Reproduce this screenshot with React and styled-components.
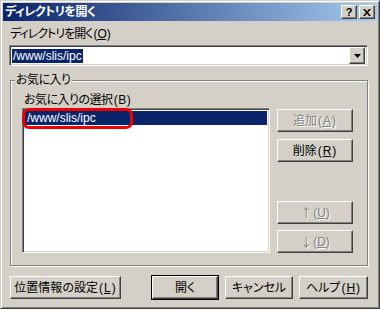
import React from 'react';
import styled, { createGlobalStyle } from 'styled-components';

const GlobalStyle = createGlobalStyle`
  html, body {
    margin: 0;
    padding: 0;
    background: #d4d0c8;
  }
  body {
    font-family: "Liberation Sans", "Noto Sans CJK JP", sans-serif;
    font-size: 12px;
    font-feature-settings: "palt";
  }
`;

const FACE = '#d4d0c8';
const NAVY = '#0a246a';

const Window = styled.div`
  box-sizing: border-box;
  width: 380px;
  height: 309px;
  background: ${FACE};
  border: 1px solid;
  border-color: ${FACE} #404040 #404040 ${FACE};
  box-shadow: inset 1px 1px #fff, inset -1px -1px #808080;
  padding: 2px;
  display: flex;
  flex-direction: column;
`;

const TitleBar = styled.div`
  height: 18px;
  display: flex;
  align-items: center;
  padding: 0 2px 0 2px;
  background: linear-gradient(to right, ${NAVY}, #a6caf0);
`;

const Title = styled.div`
  flex: 1;
  color: #fff;
  font-weight: bold;
  font-size: 12px;
  letter-spacing: -0.5px;
  line-height: 14px;
`;

const CaptionButton = styled.div`
  box-sizing: border-box;
  width: 16px;
  height: 14px;
  margin-left: ${(p) => (p.$gap ? '2px' : '0')};
  background: ${FACE};
  border: 1px solid;
  border-color: #fff #404040 #404040 #fff;
  box-shadow: inset -1px -1px #808080;
  display: flex;
  align-items: center;
  justify-content: center;
  font-family: "Liberation Sans", sans-serif;
  font-weight: bold;
  font-size: 11px;
  line-height: 11px;
  color: #000;
`;

const Body = styled.div`
  flex: 1;
  display: flex;
  flex-direction: column;
  padding: 6px 9px 0 6px;
`;

const Label = styled.div`
  line-height: 14px;
  color: #000;
  padding-left: ${(p) => p.$indent || 0}px;
  letter-spacing: ${(p) => p.$tight || 0}px;
  white-space: nowrap;
`;

const Key = styled.span`
  text-decoration: underline;
  text-underline-offset: 1px;
`;

const Paren = styled.span`
  padding: 0 1px;
`;

const Arrow = styled.span`
  font-family: "Noto Sans CJK JP", sans-serif;
  font-size: 12px;
  margin-right: 1px;
`;

const Combo = styled.div`
  box-sizing: border-box;
  margin-top: 4px;
  height: 21px;
  background: #fff;
  border: 1px solid;
  border-color: #808080 #fff #fff #808080;
  box-shadow: inset 1px 1px #404040, inset -1px -1px ${FACE};
  padding: 2px;
  display: flex;
  align-items: center;
`;

const ComboText = styled.div`
  flex: 1;
  display: flex;
`;

const Selected = styled.span`
  background: ${NAVY};
  color: #fff;
  line-height: 14px;
  padding: 0 1px;
`;

const DropButton = styled(CaptionButton)`
  width: 16px;
  height: 17px;
`;

const Group = styled.div`
  position: relative;
  margin: 14px 0 0 1px;
  border: 1px solid #808080;
  box-shadow: inset 1px 1px #fff, 1px 1px #fff;
  padding: 12px 14px 12px 11px;
  display: flex;
  flex-direction: column;
`;

const GroupTitle = styled.div`
  position: absolute;
  top: -8px;
  left: 4px;
  padding: 0 1px;
  background: ${FACE};
  line-height: 14px;
  letter-spacing: -0.5px;
`;

const GroupRow = styled.div`
  display: flex;
  gap: 7px;
  margin-top: 1px;
`;

const ListBox = styled.div`
  position: relative;
  box-sizing: border-box;
  width: 248px;
  height: 145px;
  background: #fff;
  border: 1px solid;
  border-color: #808080 #fff #fff #808080;
  box-shadow: inset 1px 1px #404040, inset -1px -1px ${FACE};
  padding: 2px;
`;

const ListItem = styled.div`
  height: 14px;
  line-height: 14px;
  padding-left: 2px;
  background: ${(p) => (p.$selected ? NAVY : 'transparent')};
  color: ${(p) => (p.$selected ? '#fff' : '#000')};
`;

const Highlight = styled.div`
  position: absolute;
  left: -1px;
  top: -1px;
  width: 111px;
  height: 21px;
  box-sizing: border-box;
  border: 3px solid #f00000;
  border-radius: 7px;
`;

const ButtonColumn = styled.div`
  display: flex;
  flex-direction: column;
  justify-content: space-between;
  padding: 1px 0 0;
`;

const ButtonStack = styled.div`
  display: flex;
  flex-direction: column;
  gap: ${(p) => p.$gap}px;
`;

const Button = styled.div`
  box-sizing: border-box;
  width: ${(p) => p.$w}px;
  height: 23px;
  background: ${FACE};
  border: 1px solid;
  border-color: #fff #404040 #404040 #fff;
  box-shadow: inset -1px -1px #808080;
  display: flex;
  align-items: center;
  justify-content: center;
  line-height: 14px;
  white-space: nowrap;
  color: ${(p) => (p.$disabled ? '#808080' : '#000')};
  text-shadow: ${(p) => (p.$disabled ? '1px 1px #fff' : 'none')};
`;

const DefaultFrame = styled.div`
  border: 1px solid #000;
  display: flex;
`;

const Footer = styled.div`
  display: flex;
  align-items: center;
  margin-top: 9px;
  padding-left: 1px;
`;

const FooterRight = styled.div`
  margin-left: auto;
  display: flex;
  align-items: center;
  gap: 6px;
`;

function DropArrow() {
  return (
    <svg width="7" height="4" viewBox="0 0 7 4">
      <path d="M0 0h7L3.5 4z" fill="#000" />
    </svg>
  );
}

function CloseGlyph() {
  return (
    <svg width="8" height="7" viewBox="0 0 8 7">
      <path d="M0 0h2l2 2.5L6 0h2L5 3.5 8 7H6L4 4.5 2 7H0l3-3.5z" fill="#000" />
    </svg>
  );
}

export default function App() {
  return (
    <>
      <GlobalStyle />
      <Window>
        <TitleBar>
          <Title>ディレクトリを開く</Title>
          <CaptionButton>?</CaptionButton>
          <CaptionButton $gap>
            <CloseGlyph />
          </CaptionButton>
        </TitleBar>
        <Body>
          <Label $indent={1} $tight={-1}>
            ディレクトリを開く<Paren>(</Paren>
            <Key>O</Key>
            <Paren>)</Paren>
          </Label>
          <Combo>
            <ComboText>
              <Selected>/www/slis/ipc</Selected>
            </ComboText>
            <DropButton>
              <DropArrow />
            </DropButton>
          </Combo>
          <Group>
            <GroupTitle>お気に入り</GroupTitle>
            <Label $indent={2} $tight={-0.5}>
              お気に入りの選択<Paren>(</Paren>B<Paren>)</Paren>
            </Label>
            <GroupRow>
              <ListBox>
                <ListItem $selected>/www/slis/ipc</ListItem>
                <Highlight />
              </ListBox>
              <ButtonColumn>
                <ButtonStack $gap={7}>
                  <Button $w={76} $disabled>
                    追加<Paren>(</Paren>
                    <Key>A</Key>
                    <Paren>)</Paren>
                  </Button>
                  <Button $w={76}>
                    削除<Paren>(</Paren>
                    <Key>R</Key>
                    <Paren>)</Paren>
                  </Button>
                </ButtonStack>
                <ButtonStack $gap={6}>
                  <Button $w={76} $disabled>
                    <Arrow>↑</Arrow>(<Key>U</Key>)
                  </Button>
                  <Button $w={76} $disabled>
                    <Arrow>↓</Arrow>(<Key>D</Key>)
                  </Button>
                </ButtonStack>
              </ButtonColumn>
            </GroupRow>
          </Group>
          <Footer>
            <Button $w={111}>
              位置情報の設定<Paren>(</Paren>
              <Key>L</Key>
              <Paren>)</Paren>
            </Button>
            <FooterRight>
              <DefaultFrame>
                <Button $w={66}>開く</Button>
              </DefaultFrame>
              <Button $w={68}>キャンセル</Button>
              <Button $w={69}>
                ヘルプ<Paren>(</Paren>
                <Key>H</Key>
                <Paren>)</Paren>
              </Button>
            </FooterRight>
          </Footer>
        </Body>
      </Window>
    </>
  );
}
